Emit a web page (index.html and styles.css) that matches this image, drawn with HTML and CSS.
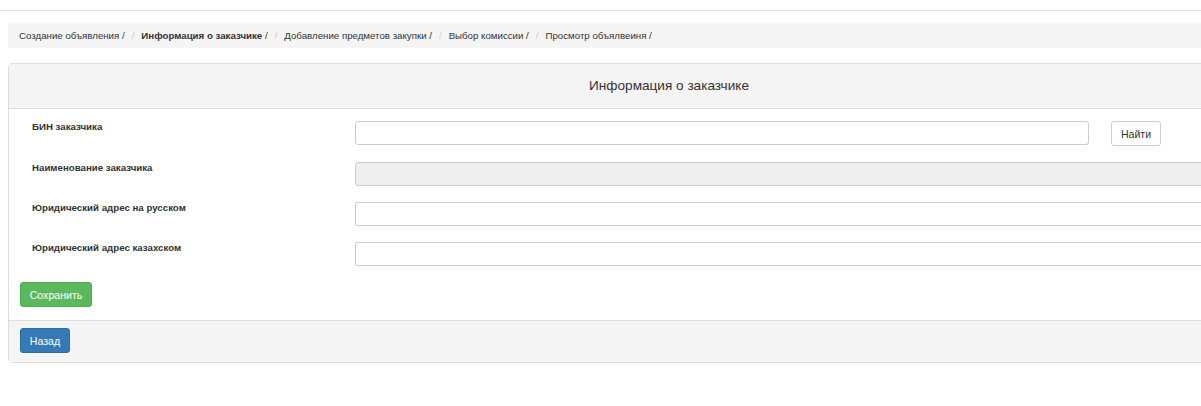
FILE: index.html
```html
<!DOCTYPE html>
<html>
<head>
    <meta charset="utf-8">
    <link rel="stylesheet" href="styles.css">
</head>
<body>
    <div class="topbar"></div>

    <ol class="breadcrumb">
        <li>Создание объявления /</li>
        <li><b>Информация о заказчике</b> /</li>
        <li>Добавление предметов закупки /</li>
        <li>Выбор комиссии /</li>
        <li>Просмотр объялвеиня /</li>
    </ol>

    <div class="panel">
        <div class="panel-heading">Информация о заказчике</div>
        <div class="panel-body">
            <div class="form-row">
                <label>БИН заказчика</label>
                <input type="text" class="field short">
                <button class="btn btn-default">Найти</button>
            </div>
            <div class="form-row">
                <label>Наименование заказчика</label>
                <input type="text" class="field" disabled>
            </div>
            <div class="form-row">
                <label>Юридический адрес на русском</label>
                <input type="text" class="field">
            </div>
            <div class="form-row">
                <label>Юридический адрес казахском</label>
                <input type="text" class="field">
            </div>
            <button class="btn btn-success">Сохранить</button>
        </div>
        <div class="panel-footer">
            <button class="btn btn-primary">Назад</button>
        </div>
    </div>
</body>
</html>
```

FILE: styles.css
```css
body {
    margin: 0;
    font-family: "Liberation Sans", Arial, sans-serif;
    color: #333;
    overflow: hidden;
}

.topbar {
    height: 10px;
    border-bottom: 1px solid #e2e2e2;
}

.breadcrumb {
    list-style: none;
    margin: 12px 0 0 8px;
    padding: 0 11px;
    height: 25px;
    line-height: 25px;
    background: #f5f5f5;
    font-size: 9.7px;
    display: flex;
}

.breadcrumb li + li:before {
    content: "/";
    color: #ccc;
    padding: 0 7px;
}

.panel {
    margin: 15px 0 0 8px;
    width: 1320px;
    border: 1px solid #ddd;
    border-radius: 4px;
}

.panel-heading {
    height: 44px;
    line-height: 44px;
    text-align: center;
    font-size: 13.6px;
    background: #f4f4f4;
    border-bottom: 1px solid #ddd;
}

.panel-body {
    padding: 12px 11px 13px;
}

.form-row {
    display: flex;
    align-items: flex-start;
    margin-bottom: 16px;
}

.form-row label {
    width: 335px;
    padding-left: 12px;
    box-sizing: border-box;
    font-size: 9.7px;
    font-weight: bold;
    line-height: 12px;
}

.field {
    flex: 1;
    height: 24px;
    box-sizing: border-box;
    border: 1px solid #ccc;
    border-radius: 3px;
    margin-right: 12px;
}

.field:disabled {
    background: #eee;
}

.field.short {
    flex: none;
    width: 734px;
    margin-right: 22px;
}

.btn {
    font-family: inherit;
    font-size: 10.6px;
    height: 25px;
    padding: 0;
    border: 1px solid;
    border-radius: 3px;
}

.btn-default {
    background: #fff;
    border-color: #ccc;
    color: #333;
    width: 50px;
}

.btn-success {
    background: #5cb85c;
    border-color: #4cae4c;
    color: #fff;
    width: 72px;
}

.btn-primary {
    background: #337ab7;
    border-color: #2e6da4;
    color: #fff;
    width: 50px;
}

.panel-footer {
    background: #f5f5f5;
    border-top: 1px solid #ddd;
    padding: 7px 11px 8px;
    height: 26px;
}
```
